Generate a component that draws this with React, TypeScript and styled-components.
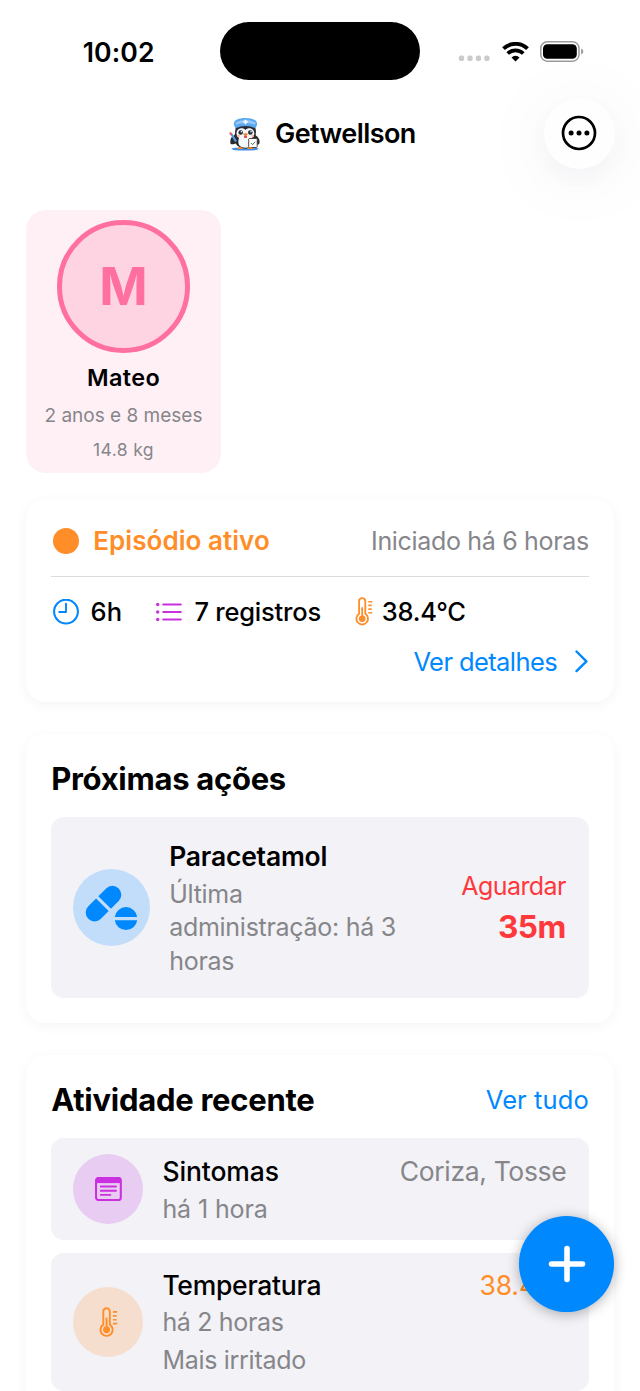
import React from "react";
import styled, { createGlobalStyle } from "styled-components";

const blue = "#0088ff";
const orange = "#ff8d28";
const purple = "#cb30e0";
const red = "#ff383c";
const pink = "#ff6f9f";
const gray = "#86868a";

const GlobalStyle = createGlobalStyle`
  *, *::before, *::after { box-sizing: border-box; }
  body { margin: 0; background: #fff; font-family: Inter, "Liberation Sans", sans-serif; color: #000; }
  svg { display: block; flex: none; }
  h1, h2, h3, p { margin: 0; }
`;

const Screen = styled.div`
  position: relative;
  display: flex;
  flex-direction: column;
  width: 640px;
  height: 1391px;
  overflow: hidden;
  background: #fff;
`;

const Text = styled.span<{ $size: number; $line: number; $weight?: number; $spacing?: number; $color?: string }>`
  display: block;
  white-space: nowrap;
  font-size: ${(p) => p.$size}px;
  line-height: ${(p) => p.$line}px;
  font-weight: ${(p) => p.$weight ?? 400};
  letter-spacing: ${(p) => p.$spacing ?? 0}px;
  color: ${(p) => p.$color ?? "#000"};
`;

const StatusBar = styled.header`
  display: grid;
  grid-template-columns: 220px 200px 220px;
  align-items: center;
  height: 98px;
  flex: none;
`;

const Clock = styled.div`
  padding: 5px 0 0 82.7px;
`;

const Island = styled.div`
  height: 58px;
  margin-top: 4px;
  border-radius: 29px;
  background: #000;
`;

const StatusIcons = styled.div`
  display: flex;
  align-items: center;
  gap: 11.5px;
  padding: 5px 0 0 38px;
`;

const NavBar = styled.nav`
  position: relative;
  display: flex;
  align-items: center;
  justify-content: space-between;
  height: 71px;
  flex: none;
  padding: 0 25.2px 0 223.5px;
`;

const Brand = styled.div`
  display: flex;
  align-items: center;
  gap: 11.5px;

  h1 {
    padding-top: 1.4px;
  }
`;

const MoreButton = styled.button`
  display: flex;
  align-items: center;
  justify-content: center;
  width: 70.6px;
  height: 70.6px;
  padding: 0 1px 1px 0;
  border: 0;
  border-radius: 50%;
  background: #fefefe;
  box-shadow: 0 10px 26px rgba(30, 30, 80, 0.035), 0 8px 80px 6px rgba(30, 30, 80, 0.045);
`;

const Content = styled.main`
  display: flex;
  flex-direction: column;
  padding: 41px 25.8px 0;
`;

const ProfileCard = styled.section`
  display: flex;
  flex-direction: column;
  align-items: center;
  width: 195.4px;
  height: 263.4px;
  padding-top: 10.2px;
  border-radius: 20px;
  background: #fff0f5;
`;

const Avatar = styled.div`
  display: flex;
  align-items: center;
  justify-content: center;
  width: 132.4px;
  height: 132.4px;
  margin-bottom: 10.5px;
  padding-top: 1.2px;
  border: 5px solid ${pink};
  border-radius: 50%;
  background: #ffd4e2;
`;

const Card = styled.section<{ $height: number; $gap: number }>`
  display: flex;
  flex-direction: column;
  height: ${(p) => p.$height}px;
  margin-top: ${(p) => p.$gap}px;
  padding: 0 25.4px;
  flex: none;
  border-radius: 20px;
  background: #fff;
  box-shadow: 0 3px 14px rgba(0, 0, 20, 0.042);
`;

const CardHeader = styled.div<{ $height: number; $top: number }>`
  display: flex;
  align-items: center;
  justify-content: space-between;
  height: ${(p) => p.$height}px;
  margin-top: ${(p) => p.$top}px;
`;

const EpisodeTitle = styled.div`
  display: flex;
  align-items: center;
  gap: 14.5px;
  padding-left: 1.6px;
`;

const EpisodeDot = styled.i`
  width: 26px;
  height: 26px;
  border-radius: 50%;
  background: ${orange};
`;

const Divider = styled.hr`
  width: 100%;
  height: 1px;
  margin: 14.6px 0 0;
  border: 0;
  background: #dcdcdd;
`;

const Stats = styled.div`
  display: flex;
  align-items: center;
  height: 36px;
  margin-top: 17px;
  padding-left: 1.6px;
`;

const Stat = styled.div<{ $gap: number; $after?: number }>`
  display: flex;
  align-items: center;
  gap: ${(p) => p.$gap}px;
  margin-right: ${(p) => p.$after ?? 0}px;
`;

const DetailsLink = styled.a`
  display: flex;
  align-items: center;
  justify-content: flex-end;
  gap: 18px;
  height: 36px;
  margin-top: 14px;
  padding-right: 0.8px;
`;

const ActionRow = styled.div`
  display: flex;
  align-items: center;
  height: 180.4px;
  margin-top: 15.4px;
  padding: 0 23px 0 22px;
  flex: none;
  border-radius: 13px;
  background: #f2f2f7;
`;

const IconDisc = styled.div<{ $size: number; $tint: string }>`
  display: flex;
  align-items: center;
  justify-content: center;
  flex: none;
  width: ${(p) => p.$size}px;
  height: ${(p) => p.$size}px;
  border-radius: 50%;
  background: ${(p) => p.$tint};
`;

const ActionBody = styled.div`
  width: 245px;
  margin-left: 19px;
  padding-bottom: 1.4px;
`;

const ActionNote = styled.p`
  margin-top: 2px;
  font-size: 25px;
  line-height: 33.4px;
  letter-spacing: -0.28px;
  color: ${gray};
`;

const ActionTimer = styled.div`
  display: flex;
  flex-direction: column;
  align-items: flex-end;
  gap: 1px;
  margin-left: auto;
  padding-bottom: 2px;
`;

const ActivityList = styled.div`
  display: flex;
  flex-direction: column;
  gap: 12.8px;
  margin-top: 15.4px;
`;

const ActivityRow = styled.div<{ $height: number }>`
  display: flex;
  align-items: center;
  height: ${(p) => p.$height}px;
  padding: 0 22.5px 0 22px;
  flex: none;
  border-radius: 13px;
  background: #f2f2f7;
`;

const ActivityBody = styled.div<{ $top: number }>`
  align-self: flex-start;
  display: flex;
  flex-direction: column;
  flex: 1;
  margin-left: 19.2px;
  padding-top: ${(p) => p.$top}px;
`;

const ActivityTop = styled.div`
  display: flex;
  justify-content: space-between;
`;

const AddButton = styled.button`
  position: absolute;
  right: 25.6px;
  top: 1216px;
  display: flex;
  align-items: center;
  justify-content: center;
  width: 95.8px;
  height: 95.8px;
  padding: 0;
  border: 0;
  border-radius: 50%;
  background: ${blue};
  box-shadow: 0 2px 13px rgba(0, 0, 0, 0.3);
`;

const SignalDots = () => (
  <svg width="32" height="20" viewBox="0 0 32 20" fill="#cbcbcd">
    {[0.9, 9.4, 17.8, 26.3].map((x) => (
      <rect key={x} x={x} y="13.6" width="5.2" height="5.4" rx="1.8" />
    ))}
  </svg>
);

const Wifi = () => (
  <svg width="27" height="20" viewBox="0 0 27 20" fill="none" stroke="#000">
    <path d="M1.5 6.7a17.2 17.2 0 0 1 24 0" strokeWidth="3.9" />
    <path d="M5.7 11.5a11.2 11.2 0 0 1 15.6 0" strokeWidth="3.7" />
    <path d="M13.5 19.5l-4-4.1a5.600 5.600 0 0 1 8 0z" fill="#000" stroke="none" />
  </svg>
);

const Battery = () => (
  <svg width="44" height="21" viewBox="0 0 44 21">
    <rect x="0.8" y="0.8" width="38.2" height="19.4" rx="6.4" fill="none" stroke="#9b9b9b" strokeWidth="1.5" />
    <rect x="3" y="3.3" width="33.8" height="14.400" rx="4.3" />
    <path d="M41.1 7.4c1.3.6 2.2 1.7 2.2 3.1s-.9 2.5-2.2 3.1z" fill="#9b9b9b" />
  </svg>
);

const Penguin = () => (
  <svg width="40" height="42" viewBox="0 0 40 42">
    <ellipse cx="21" cy="36" rx="13.5" ry="1.6" fill="#3d8fe6" />
    <ellipse cx="21" cy="25" rx="11" ry="10.6" fill="#26282d" />
    <path d="M11 22c-4 1-5.4 5-4.4 9 2 .8 5 0 6.400-2zM31 22c4 2 5.400 5.500 4.200 9-2 1.300-5 .3-6.200-2z" fill="#292b30" />
    <circle cx="21.500" cy="19" r="10.500" fill="#2b2d33" />
    <path d="M21.500 17c-2.500-3.400-9-1.800-9 3.300 0 2.500 1.300 4 2.500 4.700-2 6 .4 9.800 6.500 9.800s8-4 6.300-9.800c1.400-.8 2.500-2.300 2.500-4.700 0-5-6.300-6.700-8.800-3.300z" fill="#f3f8fd" />
    <circle cx="16.700" cy="19.500" r="2.300" fill="#292b32" />
    <circle cx="26.300" cy="19.500" r="2.300" fill="#292b32" />
    <circle cx="17.400" cy="18.800" r=".8" fill="#fff" />
    <circle cx="27" cy="18.800" r=".8" fill="#fff" />
    <circle cx="14.300" cy="23" r="1.300" fill="#f9b28f" />
    <circle cx="28.800" cy="23" r="1.300" fill="#f9b28f" />
    <path d="M19 20.800q2.500-1.300 5 0L21.500 24z" fill="#f27724" />
    <path d="M20 23h3v1.500q-1.500 1.200-3 0z" fill="#e94740" />
    <path d="M10 12c-1-4.500 4-7 11.500-7S34 7.500 33 12l-1.500 3.200q-10-4.500-20 0z" fill="#5ba9ef" />
    <path d="M11.500 9.500q10-5.500 20 0l-.5 2.300q-9.500-3.500-19 0z" fill="#94c9f8" />
    <path d="M21.500 6.700v4.600M19.200 9h4.600" stroke="#fff" strokeWidth="1.700" />
    <path d="M7 20.500l5 8" stroke="#549ce1" strokeWidth="2.200" />
    <path d="M6 19.500l1.500 2.300" stroke="#e35e65" strokeWidth="2.200" />
    <rect x="24.700" y="25.500" width="8.500" height="9" rx=".8" fill="#fff" stroke="#44352f" strokeWidth=".9" />
    <path d="M27 30l1.500 1.700 2.700-3" fill="none" stroke="#5f646b" strokeWidth="1" />
    <path d="M13 36q2.800-4.200 6.800 0zM22.800 36q3.200-4.200 6.800 0z" fill="#f5832b" />
  </svg>
);

const MoreIcon = () => (
  <svg width="36" height="36" viewBox="0 0 36 36">
    <circle cx="18" cy="18" r="16" fill="none" stroke="#000" strokeWidth="2.7" />
    <circle cx="10.100" cy="18" r="2.500" />
    <circle cx="18" cy="18" r="2.500" />
    <circle cx="25.900" cy="18" r="2.500" />
  </svg>
);

const ClockIcon = () => (
  <svg width="26" height="26" viewBox="0 0 26 26" fill="none" stroke={blue} strokeWidth="2.100">
    <circle cx="13" cy="12.600" r="11.900" />
    <path d="M13 4.800v8.200H6.200" strokeWidth="1.900" strokeLinecap="round" strokeLinejoin="round" />
  </svg>
);

const ListIcon = () => (
  <svg width="27" height="20" viewBox="0 0 27 20" stroke={purple} strokeWidth="2" strokeLinecap="round">
    {[2.500, 10, 17.500].map((y) => (
      <g key={y}>
        <path d={`M8.200 ${y}h17.600`} />
        <circle cx="2.700" cy={y} r="1.700" fill={purple} stroke="none" />
      </g>
    ))}
  </svg>
);

const Thermometer = ({ height }: { height: number }) => (
  <svg width={(height * 18) / 29} height={height} viewBox="0 0 18 29" fill="none" stroke={orange} strokeWidth="1.800" strokeLinecap="round">
    <path d="M4.100 16.800V4.300a3.100 3.100 0 0 1 6.200 0v12.500a5.800 5.800 0 1 1-6.200 0z" />
    <path d="M7.200 11v9" />
    <circle cx="7.200" cy="21.700" r="3.300" fill={orange} stroke="none" />
    <path d="M13.300 4.700h4M13.300 8.400h3.400M13.300 12.100h3.400M13.300 15.800h4" strokeWidth="1.600" strokeLinecap="butt" />
  </svg>
);

const Chevron = () => (
  <svg width="13" height="23" viewBox="0 0 13 23" fill="none" stroke={blue} strokeWidth="2.400" strokeLinecap="round" strokeLinejoin="round">
    <path d="M1.500 1.500l9.900 9.800-9.900 9.800" />
  </svg>
);

const Pills = () => (
  <svg width="77" height="77" viewBox="0 0 77 77" fill={blue}>
    <g transform="translate(30.500 34.600) rotate(-45)">
      <path d="M-1.600-8.900v17.800h-11a8.900 8.900 0 0 1 0-17.800zM1.600-8.900v17.800h11a8.900 8.900 0 0 0 0-17.800z" />
    </g>
    <path d="M41.800 47.900a11.300 11.300 0 0 1 22.400 0zM41.800 51.300a11.300 11.300 0 0 0 22.400 0z" />
  </svg>
);

const NoteIcon = () => (
  <svg width="27" height="24" viewBox="0 0 27 24" fill="none" stroke={purple}>
    <rect x="1" y="1" width="24.800" height="22" rx="2.600" strokeWidth="2.100" />
    <path d="M2 0.600h23v5.500H2z" fill={purple} stroke="none" />
    <path d="M5.800 9.500h15.200M5.800 13.700h15.200M5.800 17.900h9.600" strokeWidth="1.900" strokeLinecap="round" />
  </svg>
);

const PlusIcon = () => (
  <svg width="38" height="38" viewBox="0 0 38 38" stroke="#fff" strokeWidth="5.600" strokeLinecap="round">
    <path d="M19 3.500v31M3.500 19h31" />
  </svg>
);

export default function App() {
  return (
    <>
      <GlobalStyle />
      <Screen>
        <StatusBar>
          <Clock>
            <Text $size={26.6} $line={32} $weight={600} $spacing={0.1}>10:02</Text>
          </Clock>
          <Island />
          <StatusIcons>
            <SignalDots />
            <Wifi />
            <Battery />
          </StatusIcons>
        </StatusBar>

        <NavBar>
          <Brand>
            <Penguin />
            <Text as="h1" $size={27} $line={34} $weight={600} $spacing={-0.56}>Getwellson</Text>
          </Brand>
          <MoreButton aria-label="Mais opções">
            <MoreIcon />
          </MoreButton>
        </NavBar>

        <Content>
          <ProfileCard>
            <Avatar>
              <Text $size={52} $line={60} $weight={700} $color={pink}>M</Text>
            </Avatar>
            <Text $size={23.4} $line={30} $weight={600} $spacing={0.4}>Mateo</Text>
            <Text $size={19} $line={46.4} $color={gray}>2 anos e 8 meses</Text>
            <Text $size={17.5} $line={21} $spacing={0.4} $color={gray}>14.8 kg</Text>
          </ProfileCard>

          <Card $height={202.6} $gap={26}>
            <CardHeader $height={40} $top={22}>
              <EpisodeTitle>
                <EpisodeDot />
                <Text as="h2" $size={26} $line={36} $weight={600} $spacing={0.05} $color={orange}>Episódio ativo</Text>
              </EpisodeTitle>
              <Text $size={25} $line={36} $spacing={-0.33} $color={gray}>Iniciado há 6 horas</Text>
            </CardHeader>
            <Divider />
            <Stats>
              <Stat $gap={11.8} $after={33}>
                <ClockIcon />
                <Text $size={25.5} $line={36} $weight={500}>6h</Text>
              </Stat>
              <Stat $gap={12.4} $after={34}>
                <ListIcon />
                <Text $size={25.5} $line={36} $weight={500} $spacing={-0.21}>7 registros</Text>
              </Stat>
              <Stat $gap={8.8}>
                <Thermometer height={29} />
                <Text $size={25.5} $line={36} $weight={500} $spacing={-0.2}>38.4°C</Text>
              </Stat>
            </Stats>
            <DetailsLink>
              <Text $size={25.5} $line={36} $spacing={-0.6} $color={blue}>Ver detalhes</Text>
              <Chevron />
            </DetailsLink>
          </Card>

          <Card $height={289} $gap={32.5}>
            <CardHeader $height={46} $top={21.5}>
              <Text as="h2" $size={31} $line={46} $weight={700} $spacing={-0.29}>Próximas ações</Text>
            </CardHeader>
            <ActionRow>
              <IconDisc $size={77} $tint="#c2ddfa">
                <Pills />
              </IconDisc>
              <ActionBody>
                <Text as="h3" $size={26.5} $line={40} $weight={600} $spacing={-0.21}>Paracetamol</Text>
                <ActionNote>Última administração: há 3 horas</ActionNote>
              </ActionBody>
              <ActionTimer>
                <Text $size={25} $line={40} $spacing={-0.58} $color={red}>Aguardar</Text>
                <Text $size={31.6} $line={40} $weight={700} $spacing={-0.5} $color={red}>35m</Text>
              </ActionTimer>
            </ActionRow>
          </Card>

          <Card $height={370} $gap={31.5}>
            <CardHeader $height={46} $top={22.1}>
              <Text as="h2" $size={31} $line={46} $weight={700} $spacing={-0.27}>Atividade recente</Text>
              <Text $size={25.5} $line={47.6} $spacing={0.1} $color={blue}>Ver tudo</Text>
            </CardHeader>
            <ActivityList>
              <ActivityRow $height={102}>
                <IconDisc $size={70} $tint="#e9ccf2">
                  <NoteIcon />
                </IconDisc>
                <ActivityBody $top={14}>
                  <ActivityTop>
                    <Text as="h3" $size={26.5} $line={38} $weight={500} $spacing={-0.11}>Sintomas</Text>
                    <Text $size={26.5} $line={38} $spacing={-0.34} $color={gray}>Coriza, Tosse</Text>
                  </ActivityTop>
                  <Text $size={25} $line={38.6} $spacing={-0.1} $color={gray}>há 1 hora</Text>
                </ActivityBody>
              </ActivityRow>
              <ActivityRow $height={138.2}>
                <IconDisc $size={70} $tint="#f6decf">
                  <Thermometer height={30.5} />
                </IconDisc>
                <ActivityBody $top={13.2}>
                  <ActivityTop>
                    <Text as="h3" $size={26.5} $line={38} $weight={500} $spacing={-0.25}>Temperatura</Text>
                    <Text $size={26.5} $line={38} $spacing={-0.1} $color={orange}>38.4°C</Text>
                  </ActivityTop>
                  <Text $size={25} $line={37.6} $spacing={-0.33} $color={gray}>há 2 horas</Text>
                  <Text $size={25} $line={37.6} $spacing={-0.29} $color={gray}>Mais irritado</Text>
                </ActivityBody>
              </ActivityRow>
            </ActivityList>
          </Card>
        </Content>

        <AddButton aria-label="Adicionar">
          <PlusIcon />
        </AddButton>
      </Screen>
    </>
  );
}
